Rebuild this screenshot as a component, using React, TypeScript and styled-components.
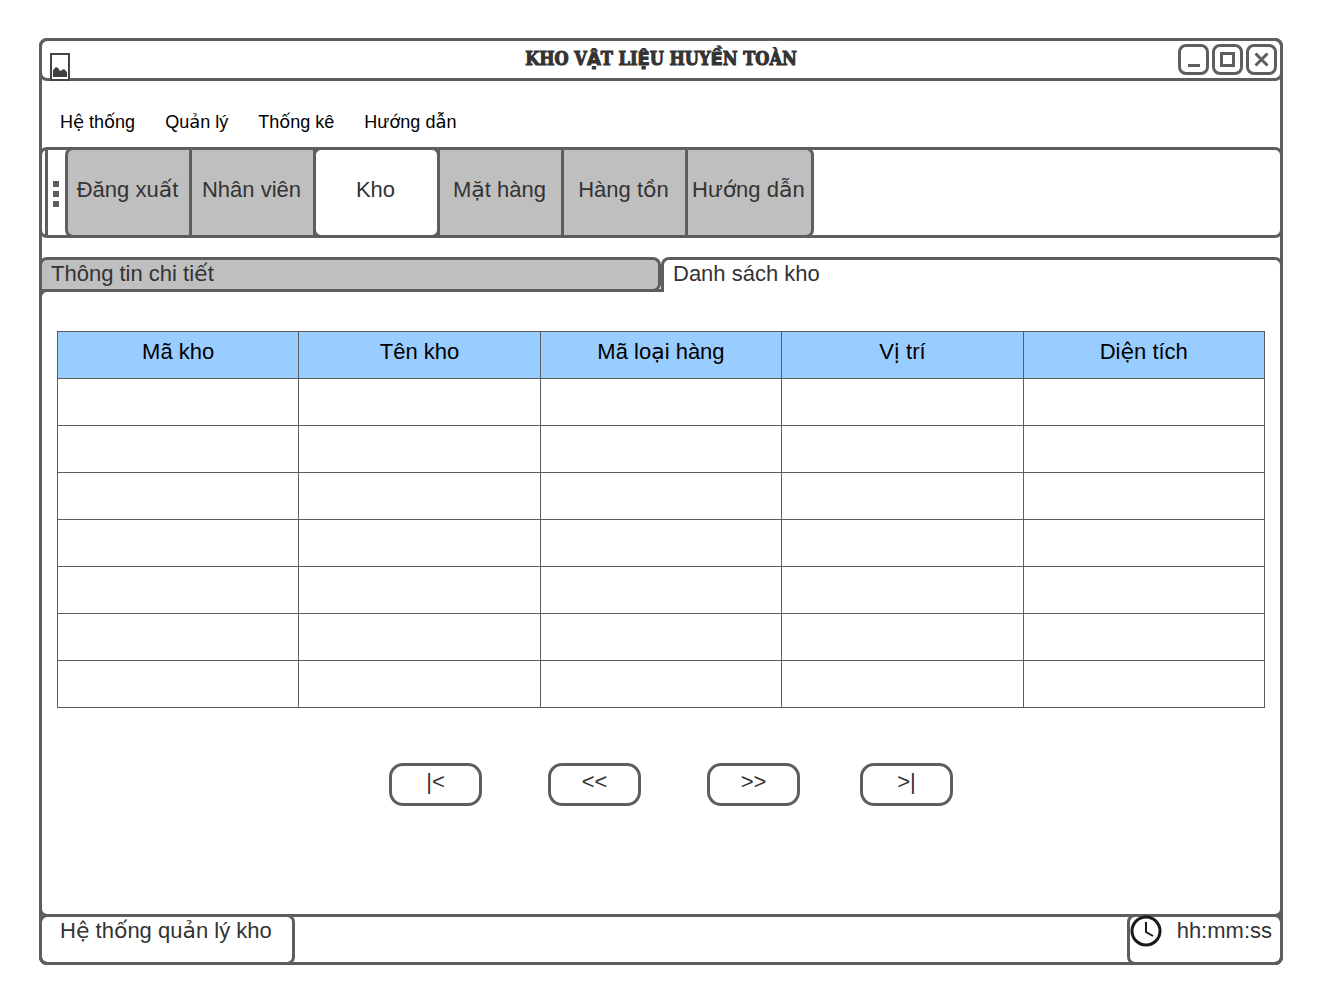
import React, { useState } from "react";
import styled, { createGlobalStyle } from "styled-components";

const LINE = "#5e5e5e";
const INK = "#333333";

const GlobalStyle = createGlobalStyle`
  *, *::before, *::after { box-sizing: border-box; }
  body {
    margin: 0;
    background: #ffffff;
    color: ${INK};
    font-family: "Liberation Sans", Arial, sans-serif;
    font-size: 22px;
    line-height: 26px;
  }
  button { font: inherit; color: inherit; cursor: pointer; padding: 0; margin: 0; }
`;

const Window = styled.main`
  display: flex;
  flex-direction: column;
  min-height: calc(100vh - 77px);
  margin: 38px 38px 39px 39px;
  border: 3px solid ${LINE};
  border-radius: 8px;
`;

const TitleBar = styled.header`
  display: grid;
  grid-template-columns: 1fr auto 1fr;
  height: 43px;
  margin: -3px -3px 0;
  padding: 0 3px;
  border: 3px solid ${LINE};
  border-radius: 8px;
`;

const AppIcon = styled.svg`
  align-self: start;
  width: 20px;
  height: 28px;
  margin: 12px 0 0 5px;
`;

const Title = styled.h1`
  margin: 0;
  font-family: "DejaVu Serif Condensed", "DejaVu Serif", serif;
  font-size: 18px;
  font-weight: 700;
  line-height: 36px;
  white-space: nowrap;
  -webkit-text-stroke: 1px ${INK};
`;

const WindowControls = styled.div`
  display: flex;
  justify-content: flex-end;
  gap: 3px;
  padding-top: 3px;
`;

const WindowButton = styled.button`
  width: 31px;
  height: 31px;
  border: 3px solid ${LINE};
  border-radius: 8px;
  background: #ffffff;

  svg { display: block; }
`;

const MenuBar = styled.nav`
  display: flex;
  gap: 30px;
  height: 66px;
  padding: 28px 18px 0;
`;

const MenuButton = styled.button`
  height: 26px;
  border: 0;
  background: none;
  color: #000000;
  font-size: 18px;
`;

const Toolbar = styled.div`
  display: flex;
  height: 91px;
  margin: 0 -3px;
  border: 3px solid ${LINE};
  border-radius: 8px;
`;

const Grip = styled.div`
  display: flex;
  flex-direction: column;
  align-items: center;
  justify-content: center;
  gap: 4px;
  width: 20px;
  margin-left: 3px;
  padding: 3px 2px 0 0;
  border-left: 3px solid ${LINE};
`;

const GripDot = styled.span`
  width: 6px;
  height: 6px;
  background: ${LINE};
`;

const ToolButton = styled.button<{ $active: boolean }>`
  position: relative;
  z-index: ${(p) => (p.$active ? 1 : 0)};
  min-width: 127px;
  margin: -3px -3px -3px 0;
  padding: 0 6px 6px 4px;
  border: 3px solid ${LINE};
  border-radius: ${(p) => (p.$active ? "8px" : "0")};
  background: ${(p) => (p.$active ? "#ffffff" : "#bfbfbf")};
  white-space: nowrap;

  &:first-of-type { border-radius: 8px 0 0 8px; }
  &:last-of-type { border-radius: 0 8px 8px 0; }
`;

const TabStrip = styled.div`
  display: flex;
  margin: 19px -3px 0;
`;

const Tab = styled.button<{ $active: boolean }>`
  position: relative;
  z-index: 1;
  flex: 1;
  height: 35px;
  padding: ${(p) => (p.$active ? "0 9px 5px" : "0 9px 2px")};
  border: 3px solid ${LINE};
  border-bottom-width: ${(p) => (p.$active ? "0" : "3px")};
  border-radius: ${(p) => (p.$active ? "8px 8px 0 0" : "8px 8px 8px 0")};
  background: ${(p) => (p.$active ? "#ffffff" : "#bfbfbf")};
  line-height: 26px;
  text-align: left;
`;

const Panel = styled.section`
  flex: 1;
  margin: -3px -3px 0;
  padding: 39px 15px;
  border: 3px solid ${LINE};
  border-radius: 8px 0 8px 8px;
`;

const Table = styled.table`
  width: 100%;
  border-collapse: collapse;
  table-layout: fixed;
`;

const HeadCell = styled.th`
  height: 47px;
  padding: 0 0 6px;
  border: 1px solid ${LINE};
  background: #99ccff;
  color: #000000;
  font-weight: 400;
`;

const Cell = styled.td`
  height: 47px;
  padding: 0;
  border: 1px solid ${LINE};
`;

const Pager = styled.nav`
  display: flex;
  justify-content: center;
  gap: 60px;
  margin-top: 55px;
  padding-left: 20px;
`;

const PagerButton = styled.button`
  width: 93px;
  height: 43px;
  padding-bottom: 6px;
  border: 3px solid ${LINE};
  border-radius: 14px;
  background: #ffffff;

  &:nth-child(-n + 2) { margin-right: 6px; }
`;

const StatusBar = styled.footer`
  display: flex;
  justify-content: space-between;
  height: 51px;
  margin: -3px;
  border: 3px solid ${LINE};
  border-radius: 8px;
`;

const StatusCell = styled.div<{ $wide?: boolean }>`
  display: flex;
  align-items: flex-start;
  gap: 15px;
  margin: -3px;
  padding: ${(p) => (p.$wide ? "1px 20px 0 18px" : "1px 8px 0 0")};
  border: 3px solid ${LINE};
  border-radius: 8px;
  white-space: nowrap;
`;

const ClockIcon = styled.svg`
  width: 32px;
  height: 32px;
  margin-top: -3px;
`;

const Accented = styled.span`
  font-family: "DejaVu Sans", sans-serif;
  line-height: 1px;
`;

/* Letters that carry two Vietnamese marks are set in DejaVu Sans. */
function Viet({ text }: { text: string }) {
  return (
    <span>
      {text.split(/([\u1ea0-\u1ef9]+)/).map((part, i) =>
        i % 2 ? <Accented key={i}>{part}</Accented> : part
      )}
    </span>
  );
}

const menus = ["Hệ thống", "Quản lý", "Thống kê", "Hướng dẫn"];
const tools = ["Đăng xuất", "Nhân viên", "Kho", "Mặt hàng", "Hàng tồn", "Hướng dẫn"];
const tabs = ["Thông tin chi tiết", "Danh sách kho"];
const columns = ["Mã kho", "Tên kho", "Mã loại hàng", "Vị trí", "Diện tích"];
const rows = [0, 1, 2, 3, 4, 5, 6];
const pages = [
  { text: "|<", label: "Trang đầu" },
  { text: "<<", label: "Trang trước" },
  { text: ">>", label: "Trang sau" },
  { text: ">|", label: "Trang cuối" },
];

export default function App() {
  const [tool, setTool] = useState("Kho");
  const [tab, setTab] = useState("Danh sách kho");

  return (
    <>
      <GlobalStyle />
      <Window>
        <TitleBar>
          <AppIcon viewBox="0 0 20 28" aria-hidden="true">
            <path d="M1 1H19V27H1Z" fill="#ffffff" stroke="#444444" strokeWidth="2" />
            <path d="M3 24V17L6 14L8 15L10 18L14 16L17 19V24Z" fill="#404040" />
          </AppIcon>
          <Title><Viet text="KHO VẬT LIỆU HUYỀN TOÀN" /></Title>
          <WindowControls>
            <WindowButton aria-label="Thu nhỏ">
              <svg width="25" height="25" viewBox="0 0 25 25">
                <path d="M7 18.5H19" stroke={LINE} strokeWidth="3" />
              </svg>
            </WindowButton>
            <WindowButton aria-label="Phóng to">
              <svg width="25" height="25" viewBox="0 0 25 25">
                <rect x="6.5" y="6.5" width="12" height="12" fill="none" stroke={LINE} strokeWidth="3" />
              </svg>
            </WindowButton>
            <WindowButton aria-label="Đóng">
              <svg width="25" height="25" viewBox="0 0 25 25">
                <path d="M6.5 6.5L18.5 18.5M18.5 6.5L6.5 18.5" stroke={LINE} strokeWidth="3" />
              </svg>
            </WindowButton>
          </WindowControls>
        </TitleBar>

        <MenuBar>
          {menus.map((m) => (
            <MenuButton key={m}><Viet text={m} /></MenuButton>
          ))}
        </MenuBar>

        <Toolbar>
          <Grip>
            <GripDot />
            <GripDot />
            <GripDot />
          </Grip>
          {tools.map((t) => (
            <ToolButton key={t} $active={t === tool} onClick={() => setTool(t)}>
              <Viet text={t} />
            </ToolButton>
          ))}
        </Toolbar>

        <TabStrip role="tablist">
          {tabs.map((t) => (
            <Tab key={t} role="tab" aria-selected={t === tab} $active={t === tab} onClick={() => setTab(t)}>
              <Viet text={t} />
            </Tab>
          ))}
        </TabStrip>

        <Panel>
          <Table>
            <thead>
              <tr>
                {columns.map((c) => (
                  <HeadCell key={c} scope="col"><Viet text={c} /></HeadCell>
                ))}
              </tr>
            </thead>
            <tbody>
              {rows.map((r) => (
                <tr key={r}>
                  {columns.map((c) => (
                    <Cell key={c} />
                  ))}
                </tr>
              ))}
            </tbody>
          </Table>
          <Pager>
            {pages.map((p) => (
              <PagerButton key={p.label} aria-label={p.label}>{p.text}</PagerButton>
            ))}
          </Pager>
        </Panel>

        <StatusBar>
          <StatusCell $wide><Viet text="Hệ thống quản lý kho" /></StatusCell>
          <StatusCell>
            <ClockIcon viewBox="0 0 32 32" aria-hidden="true">
              <circle cx="16" cy="16" r="14" fill="none" stroke="#1a1a1a" strokeWidth="3" />
              <path d="M16 7V17L23 21" fill="none" stroke="#1a1a1a" strokeWidth="2" />
            </ClockIcon>
            hh:mm:ss
          </StatusCell>
        </StatusBar>
      </Window>
    </>
  );
}
